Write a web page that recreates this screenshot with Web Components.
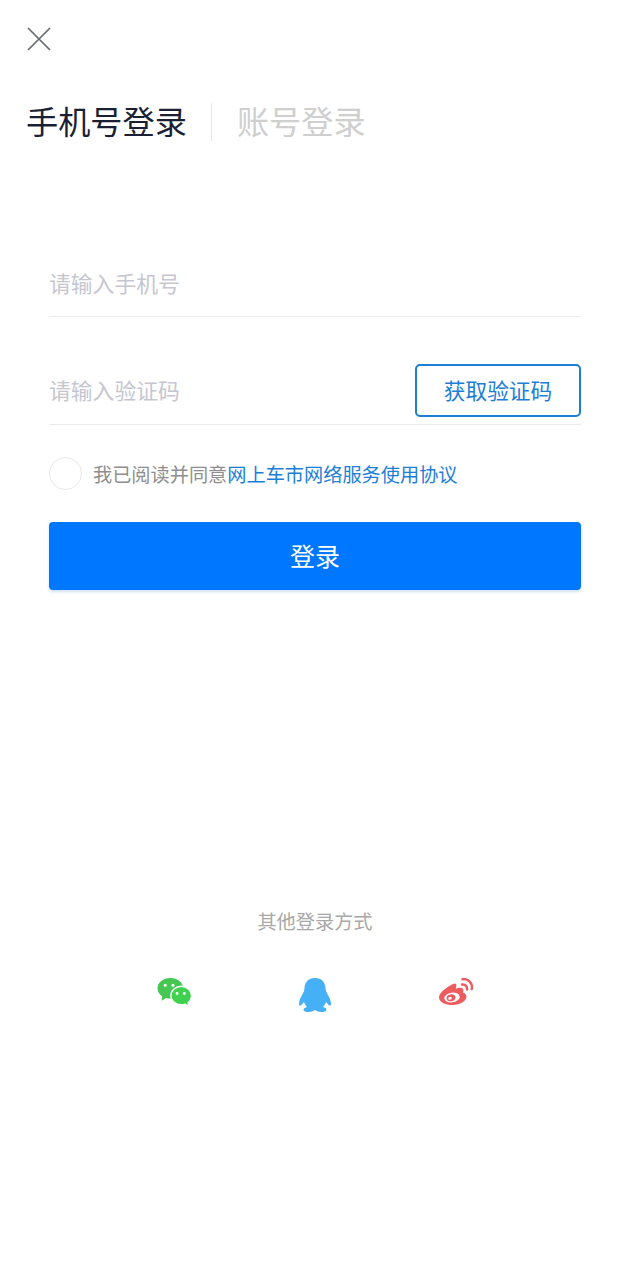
<!DOCTYPE html>
<html lang="zh-CN"><head><meta charset="utf-8"><title>登录</title>
<style>
html,body{margin:0;background:#fff;}
body{font-family:"Noto Sans CJK SC","Noto Sans",sans-serif;}
</style></head><body>
<login-page></login-page>
<script>
class BaseEl extends HTMLElement{
  constructor(){super();this.attachShadow({mode:'open'}).innerHTML=this.constructor.html;}
}
class CloseButton extends BaseEl{
  static html=`<style>:host{display:block;width:24px;height:24px}svg{display:block}</style>
  <svg width="24" height="24" viewBox="0 0 24 24"><path d="M1 1 23 23M23 1 1 23" stroke="#666a6e" stroke-width="1.7" fill="none"/></svg>`;
}
class LoginTabs extends BaseEl{
  static html=`<style>:host{display:flex;align-items:center;height:38px;font-size:32.2px;line-height:34px;color:#1a1f33}
  span{padding-bottom:4px}
  .d{width:1px;height:38px;padding:0;background:#e6e6e6;margin:0 25px 0 24px}.off{color:#cfcfcf}</style>
  <span>手机号登录</span><span class="d"></span><span class="off">账号登录</span>`;
}
class FieldRow extends BaseEl{
  static html=`<style>:host{display:flex;align-items:center;justify-content:space-between;box-sizing:border-box;border-bottom:1px solid #ebebeb;font-size:21.8px;color:#c6c6d0}
  </style><slot name="label"></slot><slot></slot>`;
}
class CodeButton extends BaseEl{
  static html=`<style>:host{display:flex;align-items:center;justify-content:center;box-sizing:border-box;width:166px;height:53px;padding-bottom:2px;border:2px solid #1c7ed6;border-radius:5px;color:#1c7ed6;font-size:21.7px}</style><slot></slot>`;
}
class AgreeRow extends BaseEl{
  static html=`<style>:host{display:flex;align-items:center;height:33px;font-size:19.2px;color:#8e8e8e;white-space:nowrap}
  .c{box-sizing:border-box;width:33px;height:33px;border:1.5px solid #e8e8ea;border-radius:50%;margin-right:11px;flex:none}
  .l{color:#1c7ed6}</style><span class="c"></span><span>我已阅读并同意</span><span class="l">网上车市网络服务使用协议</span>`;
}
class SubmitButton extends BaseEl{
  static html=`<style>:host{display:flex;align-items:center;justify-content:center;box-sizing:border-box;height:68px;padding-bottom:3px;background:#0077ff;border-radius:4px;color:#fff;font-size:25px;box-shadow:0 2px 3px rgba(0,80,180,.18)}</style><slot></slot>`;
}
class SocialRow extends BaseEl{
  static html=`<style>:host{display:flex;flex-direction:column;align-items:center;color:#a8a8a8;font-size:19.2px}
  .t{height:28px;line-height:28px}
  .i{display:grid;grid-template-columns:repeat(3,34px);column-gap:107px;margin-top:43px;height:40px;align-items:start;justify-items:center}
  svg{display:block}</style>
  <div class="t">其他登录方式</div>
  <div class="i">
   <svg width="35" height="28" viewBox="0 0 34 27.200" aria-label="微信">
     <path d="M13 0C6 0 .5 4.300.5 10c0 3.200 1.800 6 4.500 7.800L4.500 22l4.300-2.600c1.300.4 2.800.6 4.200.6 7 0 12.500-4.400 12.500-10S20 0 13 0z" fill="#46c653"/>
     <path d="M33.500 17c0-5-4.600-9-10-9s-10 4-10 9 4.600 9 10 9c1.300 0 2.600-.2 3.800-.6l3.700 1.800-.8-3.200c2-1.700 3.300-4.200 3.300-7z" fill="#3ed24f" stroke="#fff" stroke-width="1.300"/>
     <circle cx="8" cy="7" r="1.500" fill="#fff"/><circle cx="15.500" cy="7" r="1.500" fill="#fff"/>
     <circle cx="19.500" cy="15" r="1.400" fill="#fff"/><circle cx="26.500" cy="15" r="1.400" fill="#fff"/>
   </svg>
   <svg width="32" height="34" viewBox="0 0 32 34" aria-label="QQ">
     <g fill="#45b0f5"><path d="M16.500 0H16C9.500 0 5.800 4 5.500 10c-.1 2-.4 3.200-1.400 5C2.200 18.500 0 22 0 26c0 1.500 1 2 2 1.300 1-.7 2-2 3-3.300.5 1.800 1.500 3.500 3 5-1.800.5-3.500 1.300-3.500 2.700C4.500 33.300 7 34 9.500 34c2.500 0 5-.7 6.500-2h.5z"/>
     <path transform="matrix(-1 0 0 1 32 0)" d="M16.500 0H16C9.500 0 5.800 4 5.500 10c-.1 2-.4 3.200-1.400 5C2.200 18.500 0 22 0 26c0 1.500 1 2 2 1.300 1-.7 2-2 3-3.300.5 1.800 1.500 3.500 3 5-1.800.5-3.500 1.300-3.500 2.700C4.500 33.300 7 34 9.500 34c2.500 0 5-.7 6.500-2h.5z"/></g>
   </svg>
   <svg width="34" height="28" viewBox="0 0 34 28" aria-label="微博">
     <path d="M14 6C8 9 0 14.500 0 19.500 0 24.500 7 27 13.500 27c7.500 0 14-4 14-8.500 0-2.500-2-3.500-3.500-4 .6-1.700.6-3.300-.6-4.200-1.700-1.200-4.600-.4-6.700.5 1-2.300 1-4.300-.1-5.100C15.800 5.200 15 5.500 14 6z" fill="#ee5b5f"/>
     <ellipse cx="13" cy="19.500" rx="7.800" ry="4.800" fill="#fff" transform="rotate(-8 13 19.500)"/>
     <ellipse cx="12" cy="19.800" rx="4.500" ry="3.400" fill="#ee5b5f" transform="rotate(-12 12 19.800)"/>
     <ellipse cx="11" cy="20.300" rx="1.800" ry="1.400" fill="#fff" transform="rotate(-20 11 20.300)"/>
     <path d="M23 6.500c3-.5 5.500 2 5 5M23.500 1.200c5.500-1 10.500 4 9.300 9.800" fill="none" stroke="#ee5b5f" stroke-width="2.400" stroke-linecap="round"/>
   </svg>
  </div>`;
}
class LoginPage extends BaseEl{
  static html=`<style>
  :host{display:block;width:630px;height:1280px;box-sizing:border-box;padding-top:27px;overflow:hidden;background:#fff}
  close-button{margin-left:27px}
  login-tabs{margin:52px 0 0 26px}
  .form{margin:126px 49px 0;display:flex;flex-direction:column}
  .r1{height:50px;padding-bottom:18px}
  .r2{height:61px;margin-top:47px;padding-bottom:7px}
  .lbl{line-height:30px}
  .r2 .lbl{margin-bottom:2px}
  agree-row{margin:32px 0 0}
  submit-button{margin-top:32px}
  social-row{margin-top:317px}
  </style>
  <close-button></close-button>
  <login-tabs></login-tabs>
  <div class="form">
    <field-row class="r1"><span slot="label" class="lbl">请输入手机号</span></field-row>
    <field-row class="r2"><span slot="label" class="lbl">请输入验证码</span><code-button>获取验证码</code-button></field-row>
    <agree-row></agree-row>
    <submit-button>登录</submit-button>
  </div>
  <social-row></social-row>`;
}
for(const [n,c] of [['close-button',CloseButton],['login-tabs',LoginTabs],['field-row',FieldRow],['code-button',CodeButton],['agree-row',AgreeRow],['submit-button',SubmitButton],['social-row',SocialRow],['login-page',LoginPage]])customElements.define(n,c);
</script>
</body></html>
